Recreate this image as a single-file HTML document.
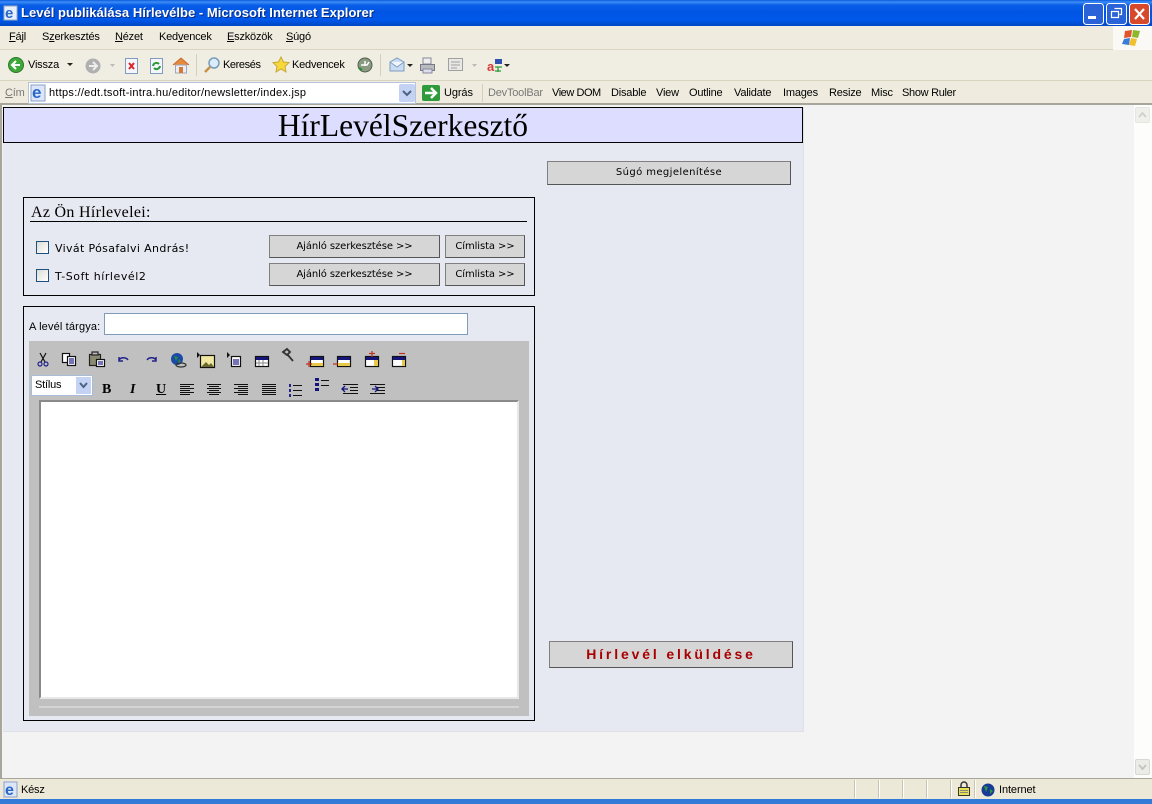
<!DOCTYPE html>
<html lang="hu"><head><meta charset="utf-8"><title>Levél publikálása Hírlevélbe</title>
<style>
html,body{margin:0;padding:0;width:1152px;height:804px;overflow:hidden;background:#f3f3f3}
body{position:relative;font-family:"Liberation Sans",sans-serif;font-size:11px;color:#000}
div,span.t{position:absolute;box-sizing:border-box}
.t{white-space:nowrap;line-height:14px}
.n{letter-spacing:-.2px}
u{text-decoration:underline}
.btn{position:absolute;box-sizing:border-box;background:#d6d6d6;border:1px solid;border-color:#808080 #555 #555 #808080;font-family:"DejaVu Sans",sans-serif;font-size:10px;text-align:center;color:#000;white-space:nowrap}
svg{position:absolute;left:0;top:0}
</style></head><body>
<!-- title bar -->
<div style="left:0;top:0;width:1152px;height:26px;background:linear-gradient(#0a5ae0 0,#3d8df5 2px,#0a5fe8 5px,#0054e3 12px,#0058ea 20px,#0048c8 25px)"></div>
<span class="t" style="left:21px;top:6px;color:#fff;font-weight:bold;font-size:13px;letter-spacing:.03px;text-shadow:1px 1px 0 #0a2a80">Levél publikálása Hírlevélbe - Microsoft Internet Explorer</span>
<!-- menu -->
<div style="left:0;top:26px;width:1152px;height:24px;background:#efecdf;border-bottom:1px solid #d8d4c0"></div>
<div style="left:1113px;top:26px;width:39px;height:24px;background:#faf9f5"></div>
<span class="t n" style="left:9px;top:30px"><u>F</u>ájl</span>
<span class="t n" style="left:42px;top:30px">S<u>z</u>erkesztés</span>
<span class="t n" style="left:115px;top:30px"><u>N</u>ézet</span>
<span class="t n" style="left:159px;top:30px">Ked<u>v</u>encek</span>
<span class="t n" style="left:227px;top:30px"><u>E</u>szközök</span>
<span class="t n" style="left:286px;top:30px"><u>S</u>úgó</span>
<!-- toolbar -->
<div style="left:0;top:50px;width:1152px;height:31px;background:#f0eee2;border-bottom:1px solid #d8d4c0"></div>
<span class="t n" style="left:28px;top:58px">Vissza</span>
<span class="t" style="left:223px;top:58px;letter-spacing:-.4px">Keresés</span>
<span class="t n" style="left:292px;top:58px">Kedvencek</span>
<!-- address -->
<div style="left:0;top:81px;width:1152px;height:24px;background:#efecdf;border-bottom:2px solid #a8a69a"></div>
<span class="t n" style="left:5px;top:86px;color:#777"><u>C</u>ím</span>
<div style="left:28px;top:82px;width:388px;height:22px;background:#fff;border:1px solid #b8c4d8"></div>
<span class="t" style="left:49px;top:86px;letter-spacing:.27px">https://edt.tsoft-intra.hu/editor/newsletter/index.jsp</span>
<div style="left:399px;top:84px;width:16px;height:18px;background:#c4d3f3;border-radius:2px"></div>
<span class="t" style="left:444px;top:86px;letter-spacing:-.1px">Ugrás</span>
<span class="t n" style="left:488px;top:86px;color:#777">DevToolBar</span>
<span class="t" style="left:552px;top:86px;letter-spacing:-.45px">View DOM</span>
<span class="t n" style="left:611px;top:86px">Disable</span>
<span class="t n" style="left:656px;top:86px">View</span>
<span class="t n" style="left:689px;top:86px">Outline</span>
<span class="t n" style="left:734px;top:86px">Validate</span>
<span class="t n" style="left:783px;top:86px">Images</span>
<span class="t n" style="left:829px;top:86px">Resize</span>
<span class="t n" style="left:871px;top:86px">Misc</span>
<span class="t" style="left:902px;top:86px;letter-spacing:-.3px">Show Ruler</span>
<!-- content -->
<div style="left:0;top:105px;width:2px;height:673px;background:#a8a69a"></div>
<div style="left:1134px;top:105px;width:18px;height:673px;background:#fdfdfb"></div>
<div style="left:1135px;top:107px;width:15px;height:16px;background:#f0f0ea;border:1px solid #e6e6e0;border-radius:2px"></div>
<div style="left:1135px;top:759px;width:15px;height:16px;background:#ecece6;border:1px solid #d8d8d2;border-radius:2px"></div>
<!-- panel -->
<div style="left:3px;top:107px;width:801px;height:625px;background:#e6e9f1;border-right:1px solid #dfe0e4;border-bottom:1px solid #dfe0e4"></div>
<div style="left:3px;top:107px;width:800px;height:36px;background:#ddddff;border:1px solid #000"></div>
<span class="t" style="left:3px;top:109px;width:800px;text-align:center;font-family:'Liberation Serif',serif;font-size:31.5px;line-height:34px">HírLevélSzerkesztő</span>
<!-- box 1 -->
<div style="left:23px;top:197px;width:512px;height:99px;border:1px solid #000"></div>
<span class="t" style="left:31px;top:204px;font-family:'Liberation Serif',serif;font-size:16px;line-height:17px;letter-spacing:.3px">Az Ön Hírlevelei:</span>
<div style="left:30px;top:221px;width:497px;height:1px;background:#000"></div>
<div style="left:36px;top:241px;width:13px;height:13px;background:linear-gradient(135deg,#dcdcd6,#fff);border:1px solid #1c5180"></div>
<div style="left:36px;top:269px;width:13px;height:13px;background:linear-gradient(135deg,#dcdcd6,#fff);border:1px solid #1c5180"></div>
<span class="t" style="left:55px;top:242px;font-family:'DejaVu Sans',sans-serif;font-size:11px;letter-spacing:.35px">Vivát Pósafalvi András!</span>
<span class="t" style="left:55px;top:270px;font-family:'DejaVu Sans',sans-serif;font-size:11px;letter-spacing:.55px">T-Soft hírlevél2</span>
<div class="btn" style="left:269px;top:235px;width:171px;height:23px;line-height:21px;letter-spacing:-.1px">Ajánló szerkesztése &gt;&gt;</div>
<div class="btn" style="left:445px;top:235px;width:80px;height:23px;line-height:21px;letter-spacing:-.1px">Címlista &gt;&gt;</div>
<div class="btn" style="left:269px;top:263px;width:171px;height:23px;line-height:21px;letter-spacing:-.1px">Ajánló szerkesztése &gt;&gt;</div>
<div class="btn" style="left:445px;top:263px;width:80px;height:23px;line-height:21px;letter-spacing:-.1px">Címlista &gt;&gt;</div>
<!-- box 2 -->
<div style="left:23px;top:306px;width:512px;height:415px;border:1px solid #000"></div>
<span class="t" style="left:29px;top:320px;letter-spacing:.15px">A levél tárgya:</span>
<div style="left:104px;top:313px;width:364px;height:22px;background:#fff;border:1px solid #7f9db9"></div>
<div style="left:29px;top:341px;width:500px;height:375px;background:#c0c0c0"></div>
<div style="left:31px;top:375px;width:62px;height:21px;background:#fff;border:1px solid #a8bcd8"></div>
<span class="t" style="left:35px;top:378px;letter-spacing:-.2px">Stílus</span>
<div style="left:76px;top:377px;width:15px;height:17px;background:#c4d3f3"></div>
<div style="left:39px;top:400px;width:480px;height:299px;background:#fff;border:2px solid;border-color:#8a8a8a #e8e8e8 #e8e8e8 #8a8a8a"></div>
<div style="left:39px;top:706px;width:480px;height:2px;background:#d4d4d4"></div>
<span class="t" style="left:102px;top:383px;font:bold 14px/14px 'Liberation Serif',serif">B</span>
<span class="t" style="left:130px;top:383px;font:italic bold 14px/14px 'Liberation Serif',serif">I</span>
<span class="t" style="left:156px;top:383px;font:bold 14px/14px 'Liberation Serif',serif"><u>U</u></span>
<!-- right buttons -->
<div class="btn" style="left:547px;top:161px;width:244px;height:24px;line-height:22px;letter-spacing:.4px">Súgó megjelenítése</div>
<div class="btn" style="left:549px;top:641px;width:244px;height:27px;line-height:25px;font-family:'Liberation Sans',sans-serif;font-weight:bold;font-size:14px;letter-spacing:2.85px;color:#a80000">Hírlevél elküldése</div>
<!-- status -->
<div style="left:0;top:778px;width:1152px;height:21px;background:#ece9d8;border-top:1px solid #a8a69a"></div>
<div style="left:0;top:799px;width:1152px;height:5px;background:#3279d8"></div>
<span class="t n" style="left:21px;top:783px">Kész</span>
<span class="t" style="left:999px;top:783px;letter-spacing:-.1px">Internet</span>
<svg width="1152" height="804" viewBox="0 0 1152 804" fill="none">
<!-- title icon -->
<rect x="4" y="6" width="13" height="14" fill="#e8f0ff" stroke="#9ab"/><text x="5" y="18" font-family="Liberation Sans" font-size="15" font-weight="bold" fill="#2a68c8">e</text>
<!-- window buttons -->
<rect x="1083.5" y="3.5" width="20" height="21" rx="3" fill="#2a62d8" stroke="#fff"/><rect x="1088" y="16" width="8" height="3" fill="#fff"/>
<rect x="1106.5" y="3.5" width="20" height="21" rx="3" fill="#2a62d8" stroke="#fff"/><path d="M1114.5 8.5h7v6h-2M1111.5 11.5h7v6h-7z" stroke="#fff" stroke-width="1.2"/>
<rect x="1129.5" y="3.5" width="20" height="21" rx="3" fill="#d8492c" stroke="#fff"/><path d="M1135 9l9 10M1144 9l-9 10" stroke="#fff" stroke-width="2.2"/>
<!-- flag -->
<path d="M1125 31l7-1-1 7-7 1z" fill="#e0542c"/><path d="M1133 30l7 1-2 7-6-1z" fill="#8cb82c"/><path d="M1124 39l6-1-1 7-7-1z" fill="#3a7ad8"/><path d="M1131 38l6 1-2 7-6-1z" fill="#f0c030"/>
<!-- toolbar icons -->
<circle cx="16" cy="65" r="7.5" fill="#3fa83a" stroke="#2a7a28"/><path d="M20 65h-7M16 61l-4 4 4 4" stroke="#fff" stroke-width="2"/>
<path d="M67 63h6l-3 3z" fill="#222"/>
<circle cx="93" cy="66" r="7.5" fill="#b0b0b0"/><path d="M89 66h7M93 62l4 4-4 4" stroke="#eee" stroke-width="2"/>
<path d="M110 64h5l-2.500 3z" fill="#bbb"/>
<rect x="125.500" y="58.500" width="12" height="15" fill="#f4f6fb" stroke="#7f9cc0"/><path d="M129 63l5 6M134 63l-5 6" stroke="#d8282c" stroke-width="2"/>
<rect x="150.500" y="58.500" width="12" height="15" fill="#f4f6fb" stroke="#7f9cc0"/><path d="M153 66a3.500 3.500 0 0 1 6-2M160 66a3.500 3.500 0 0 1-6 2" stroke="#2a9a38" stroke-width="2"/>
<path d="M173 65l8-7 8 7" fill="#e88a3c" stroke="#c86a2c"/><rect x="175.500" y="65" width="11" height="8" fill="#e8eef8" stroke="#a0a8b8"/><rect x="179" y="67" width="4" height="6" fill="#d87830"/>
<path d="M196.500 54v22" stroke="#d4d0bc"/>
<circle cx="214" cy="63" r="5" fill="#d8ecfa" stroke="#7a9ab8" stroke-width="1.500"/><path d="M210 67l-5 5" stroke="#c89040" stroke-width="2.500"/>
<path d="M281 57l2.500 5 5.500.5-4 4 1 5.500-5-3-5 3 1-5.500-4-4 5.500-.5z" fill="#f8d838" stroke="#c8a838"/>
<circle cx="365" cy="65" r="7" fill="#8a9a80" stroke="#506050"/><path d="M361 65h6l2-3M365 61v5" stroke="#fff" stroke-width="1.500"/><path d="M359 68l3 2" stroke="#2a8a38" stroke-width="2"/>
<path d="M380.500 54v22" stroke="#d4d0bc"/>
<path d="M390 62l7-4 7 4v9h-14z" fill="#c8dcf4" stroke="#7f9cc0"/><path d="M390 62l7 5 7-5" fill="#f2f6fc" stroke="#7f9cc0"/><path d="M407 64h6l-3 3z" fill="#222"/>
<rect x="423" y="58" width="8" height="6" fill="#eee" stroke="#889"/><rect x="420.500" y="64.500" width="14" height="6" fill="#b8bcc0" stroke="#778"/><rect x="423" y="69" width="9" height="4" fill="#dde" stroke="#889"/>
<rect x="448.500" y="58.500" width="14" height="12" fill="#e8e8e4" stroke="#a0a0a0"/><path d="M451 62h9M451 65h9M451 68h6" stroke="#a0a0a0"/><path d="M472 64h5l-2.500 3z" fill="#bbb"/>
<text x="487" y="71" font-family="Liberation Sans" font-size="13" font-weight="bold" fill="#d83838">a</text>
<path d="M495 59h7v5h-7z" fill="#3050b0"/><path d="M495 67h7M498 67v5M495 71h6" stroke="#2a9a38" stroke-width="1.300"/><path d="M504 64h6l-3 3z" fill="#222"/>
<!-- address icons -->
<rect x="31" y="85" width="14" height="16" fill="#dce6f8" stroke="#8aa0c8"/><text x="32" y="98" font-family="Liberation Sans" font-size="17" font-weight="bold" fill="#2a68c8">e</text>
<path d="M403 91l4 4 4-4" stroke="#4d6185" stroke-width="2"/>
<rect x="422" y="85" width="18" height="16" rx="2" fill="#2f9a3c"/><path d="M425 93h10M431 88l5 5-5 5" stroke="#fff" stroke-width="2.500"/>
<path d="M482.500 84v18" stroke="#d4d0bc"/>
<!-- scroll arrows -->
<path d="M1139 117l3.500-4 3.500 4" stroke="#d0d0ca" stroke-width="1.800"/>
<path d="M1139 765l3.500 4 3.500-4" stroke="#c4c4be" stroke-width="1.800"/>
<!-- editor toolbar row 1 -->
<g stroke-width="1.200">
<path d="M40 353l5 9M46 353l-5 9" stroke="#111"/><circle cx="40" cy="364" r="2" stroke="#22228a"/><circle cx="46" cy="364" r="2" stroke="#22228a"/>
<rect x="62.500" y="353.500" width="7" height="9" fill="#fff" stroke="#111"/><rect x="67.500" y="356.500" width="8" height="9" fill="#fff" stroke="#111"/><path d="M69 359h5M69 361h5M69 363h5" stroke="#22228a"/>
<rect x="89.500" y="354.500" width="11" height="11" fill="#8a8a70" stroke="#222"/><rect x="92" y="352" width="6" height="3" fill="#bbb" stroke="#222"/><rect x="96.500" y="359.500" width="8" height="7" fill="#fff" stroke="#111"/><path d="M98 362h5M98 364h5" stroke="#22228a"/>
<path d="M119 360a5 4 0 0 1 9 0M119 357v4h4" stroke="#22228a" stroke-width="1.500"/>
<path d="M156 360a5 4 0 0 0-9 0M156 357v4h-4" stroke="#22228a" stroke-width="1.500"/>
<circle cx="177" cy="359" r="6" fill="#1a4aa8"/><path d="M174 356l4 1-2 4zM179 359l2 3-3 1z" fill="#2a8a38"/><ellipse cx="181" cy="365" rx="5" ry="2" stroke="#333"/>
<path d="M197 352l3 3-3 3z" fill="#111"/><rect x="200.500" y="355.500" width="14" height="12" fill="#f0e8a0" stroke="#111"/><path d="M201 367l5-5 3 3 2-2 3 4z" fill="#6a6a30"/>
<path d="M227 352l3 3-3 3z" fill="#111"/><rect x="231.500" y="356.500" width="9" height="10" fill="#fff" stroke="#111"/><path d="M233 360h6M233 362h6M233 364h6" stroke="#22228a"/>
<rect x="255.500" y="356.500" width="13" height="10" fill="#fff" stroke="#111"/><rect x="256" y="357" width="12" height="3" fill="#14147a"/><path d="M259 360v6M263 360v6M256 363h12" stroke="#999"/>
<path d="M283 352l4-3 3 3-3 3zM287 354l6 7" stroke="#333" stroke-width="1.800"/>
<rect x="310.500" y="356.500" width="13" height="10" fill="#fff" stroke="#111"/><rect x="311" y="357" width="12" height="3" fill="#14147a"/><rect x="311" y="363" width="12" height="3" fill="#e8c848"/><path d="M306 364h6M309 361v6" stroke="#c03020"/>
<rect x="337.500" y="356.500" width="13" height="10" fill="#fff" stroke="#111"/><rect x="338" y="357" width="12" height="3" fill="#14147a"/><rect x="338" y="363" width="12" height="3" fill="#e8c848"/><path d="M333 364h5" stroke="#c03020"/>
<rect x="365.500" y="356.500" width="13" height="10" fill="#fff" stroke="#111"/><rect x="366" y="357" width="12" height="3" fill="#14147a"/><rect x="374" y="360" width="4" height="6" fill="#e8c848"/><path d="M372 351v6M369 353.500h6" stroke="#c03020"/>
<rect x="392.500" y="356.500" width="13" height="10" fill="#fff" stroke="#111"/><rect x="393" y="357" width="12" height="3" fill="#14147a"/><rect x="402" y="360" width="3" height="6" fill="#e8c848"/><path d="M399 353.500h6" stroke="#c03020"/>
</g>
<!-- select arrow -->
<path d="M80 383l3.500 4 3.500-4" stroke="#4d6185" stroke-width="2"/>
<!-- align -->
<g stroke="#111">
<path d="M180 384.500h14M180 386.500h10M180 388.500h14M180 390.500h10M180 392.500h14M180 394.500h10"/>
<path d="M207 384.500h14M209 386.500h10M207 388.500h14M209 390.500h10M207 392.500h14M209 394.500h10"/>
<path d="M234 384.500h14M238 386.500h10M234 388.500h14M238 390.500h10M234 392.500h14M238 394.500h10"/>
<path d="M262 384.500h14M262 386.500h14M262 388.500h14M262 390.500h14M262 392.500h14M262 394.500h14"/>
<path d="M293 385.500h9M293 390.500h9M293 395.500h9M321 380.500h8M321 385.500h8"/>
<path d="M343 384.500h15M350 387.500h8M350 390.500h8M343 393.500h15M370 384.500h15M377 387.500h8M377 390.500h8M370 393.500h15"/>
</g>
<path d="M289 384h2v3h-2zM289 389h2v3h-2zM289 394h2v3h-2z" fill="#22228a"/>
<path d="M315 378h4v3h-4zM315 383h4v3h-4zM315 388h4v3h-4z" fill="#14147a"/>
<path d="M348 389h-6M345 386l-3 3 3 3M372 389h6M375 386l3 3-3 3" stroke="#14147a" stroke-width="1.300"/>
<!-- status -->
<g stroke="#fff"><path d="M855.500 780v18M879.500 780v18M903.500 780v18M927.500 780v18M951.500 780v18M975.500 780v18"/></g>
<g stroke="#c8c4b0"><path d="M854.500 780v18M878.500 780v18M902.500 780v18M926.500 780v18M950.500 780v18M974.500 780v18"/></g>
<rect x="4" y="782" width="13" height="15" fill="#dce6f8" stroke="#8aa0c8"/><text x="5" y="795" font-family="Liberation Sans" font-size="16" font-weight="bold" fill="#2a68c8">e</text>
<path d="M961 788v-3a3 3 0 0 1 6 0v3" stroke="#333" stroke-width="1.500"/><rect x="958.500" y="787.500" width="11" height="8" fill="#e8e050" stroke="#333"/><path d="M960 790.500h8M960 792.500h8" stroke="#887"/>
<circle cx="988" cy="790" r="6.500" fill="#1a3a98"/><path d="M984 786l4 1-2 5zM990 789l3 2-3 3z" fill="#2a9a38"/>
</svg>
</body></html>
